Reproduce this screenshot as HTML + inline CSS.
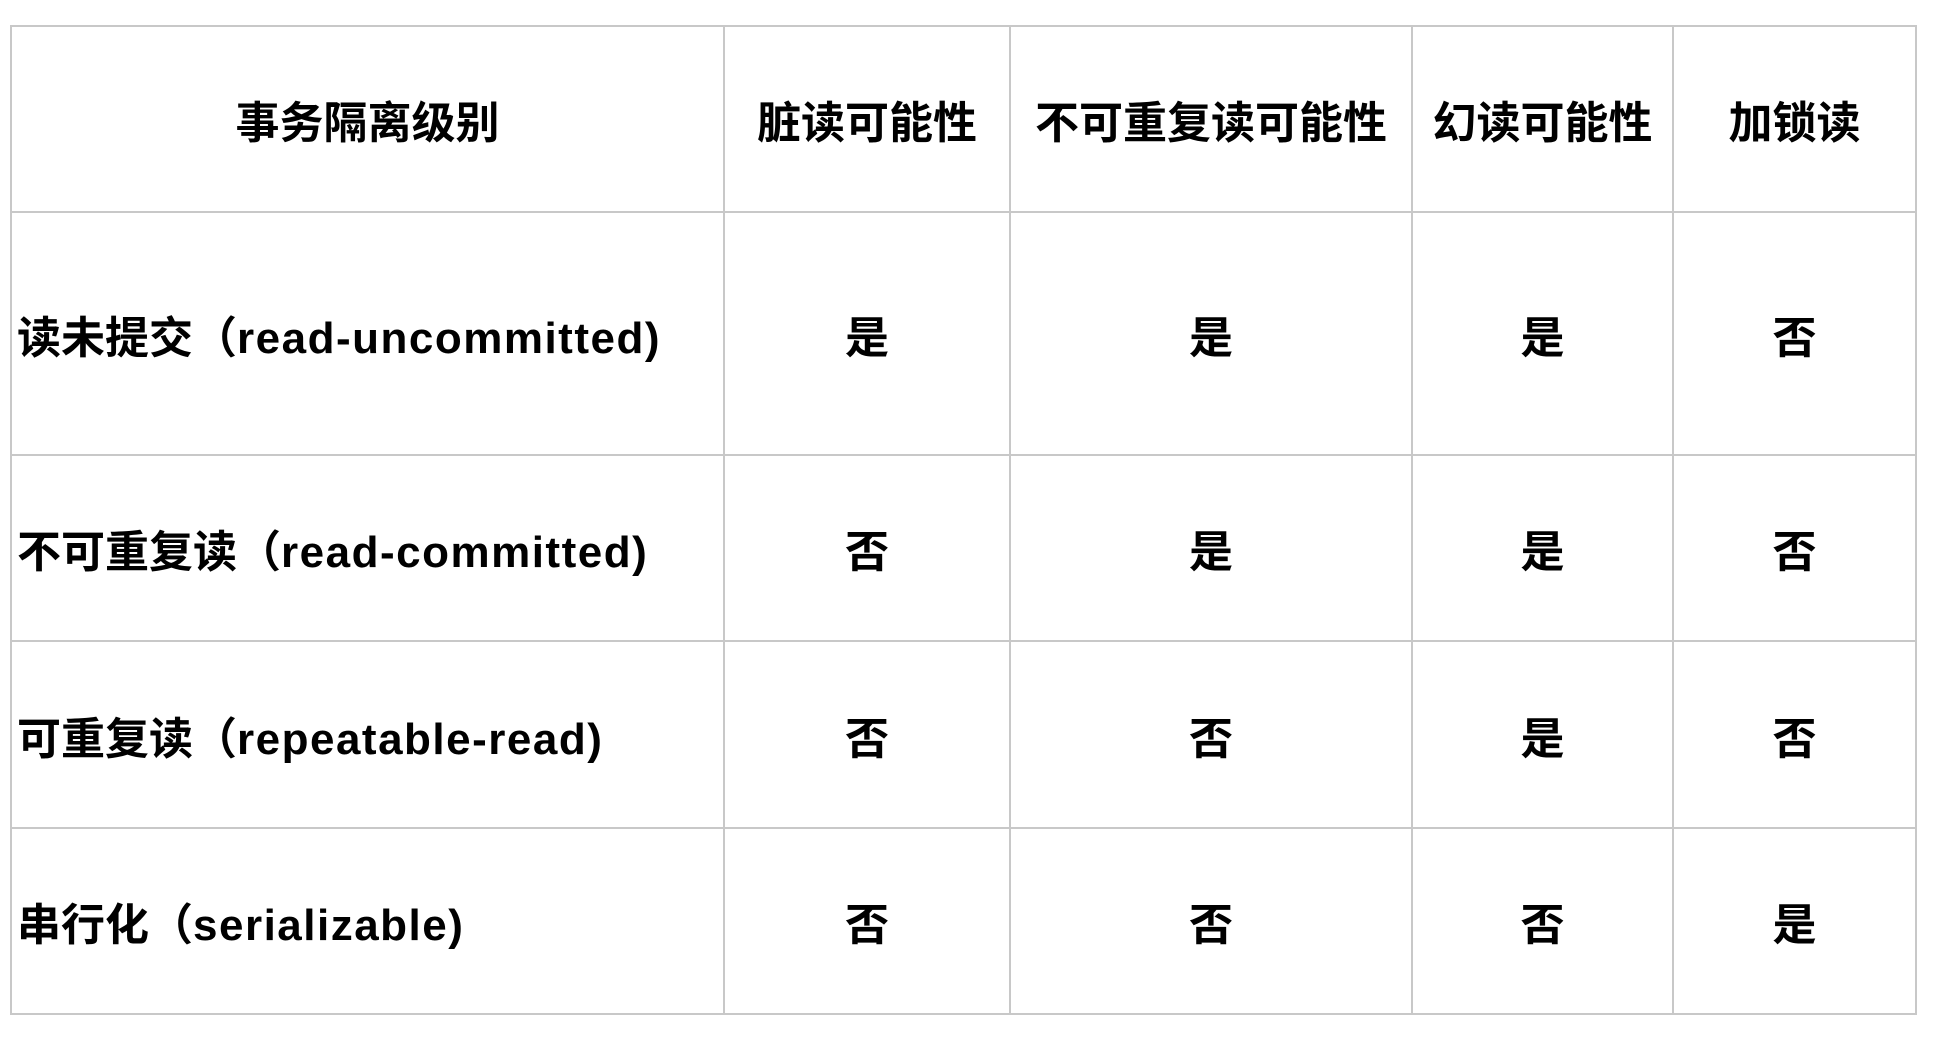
<!DOCTYPE html>
<html><head><meta charset="utf-8"><style>
html,body{margin:0;padding:0;background:#fff;width:1946px;height:1039px;overflow:hidden}
table{position:absolute;left:10px;top:25px;border-collapse:collapse;font-family:"Liberation Sans","Noto Sans CJK SC",sans-serif;font-weight:bold;color:#000;font-size:44px}
td{border:2px solid #c8c8c8;text-align:center;padding:0;vertical-align:middle}
td.l{text-align:left;padding-left:5px}
td.l span{letter-spacing:1.5px}
</style></head><body>
<table>
<colgroup><col style="width:713px"><col style="width:286px"><col style="width:402px"><col style="width:261px"><col style="width:243px"></colgroup>
<tr style="height:186px"><td>事务隔离级别</td><td>脏读可能性</td><td>不可重复读可能性</td><td>幻读可能性</td><td>加锁读</td></tr>
<tr style="height:243px"><td class="l">读未提交（<span>read-uncommitted)</span></td><td>是</td><td>是</td><td>是</td><td>否</td></tr>
<tr style="height:186px"><td class="l">不可重复读（<span>read-committed)</span></td><td>否</td><td>是</td><td>是</td><td>否</td></tr>
<tr style="height:187px"><td class="l">可重复读（<span>repeatable-read)</span></td><td>否</td><td>否</td><td>是</td><td>否</td></tr>
<tr style="height:186px"><td class="l">串行化（<span>serializable)</span></td><td>否</td><td>否</td><td>否</td><td>是</td></tr>
</table>
</body></html>
